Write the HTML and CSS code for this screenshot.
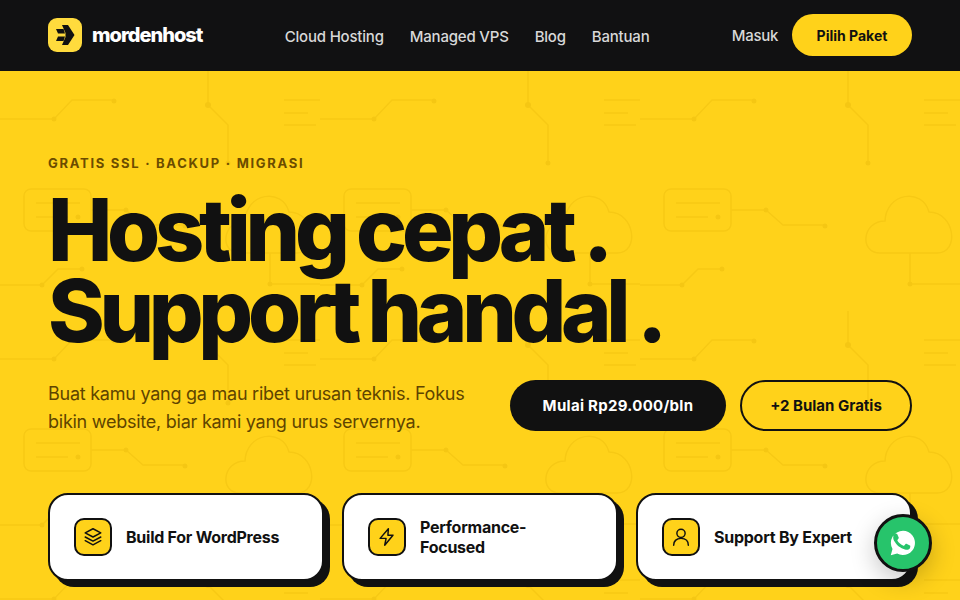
FILE: index.html
```html
<!DOCTYPE html>
<html lang="id">
<head>
<meta charset="utf-8">
<title>mordenhost</title>
<link rel="stylesheet" href="styles.css">
</head>
<body>
<header class="topbar">
  <a class="brand" href="#">
    <span class="brand-mark">
      <svg viewBox="0 0 34 34" width="34" height="34"><path d="M14 7h6l6.500 10L20 27h-6l3.500-8v-4zM8 11h7.500l1.500 4.500h-7zM10 18.500h7L15.500 23H8z" fill="#111"/></svg>
    </span>
    <span class="brand-name">mordenhost</span>
  </a>
  <nav class="nav">
    <a href="#">Cloud Hosting</a>
    <a href="#">Managed VPS</a>
    <a href="#">Blog</a>
    <a href="#">Bantuan</a>
  </nav>
  <div class="actions">
    <a class="login" href="#">Masuk</a>
    <a class="pick" href="#">Pilih Paket</a>
  </div>
</header>
<main class="hero">
  <svg class="pattern" width="100%" height="100%" aria-hidden="true">
    <defs>
      <pattern id="tile" width="320" height="240" patternUnits="userSpaceOnUse">
        <g fill="none" stroke="#f7c914" stroke-width="1.500">
          <path d="M0 48H54L72 29H114"/>
          <path d="M208 0V34L228 54V92"/>
          <path d="M284 29H320M284 42H308M284 54H316"/>
          <rect x="24" y="118" width="67" height="42" rx="7"/>
          <path d="M36 132H80M36 146H68"/>
          <path d="M91 139H126L143 154H185"/>
          <path d="M240 182C219 182 222 150 245 150C246 122 282 116 289 141C315 141 320 182 297 182Z"/>
          <path d="M270 182V213H320M0 214H42L58 198H82"/>
        </g>
        <g fill="#f5c713">
          <circle cx="54" cy="48" r="2.500"/><circle cx="114" cy="30" r="2.500"/>
          <circle cx="208" cy="34" r="3"/><circle cx="228" cy="92" r="2.500"/>
          <circle cx="78" cy="146" r="2.500"/><circle cx="126" cy="139" r="2.500"/>
          <circle cx="185" cy="155" r="2.500"/><circle cx="270" cy="213" r="2.500"/>
          <circle cx="42" cy="214" r="2.500"/><circle cx="82" cy="198" r="2.500"/>
        </g>
      </pattern>
    </defs>
    <rect width="100%" height="100%" fill="url(#tile)"/>
  </svg>
  <div class="hero-inner">
    <p class="eyebrow">GRATIS SSL · BACKUP · MIGRASI</p>
    <h1 class="headline">Hosting cepat .<br>Support handal .</h1>
    <div class="lead-row">
      <p class="lead">Buat kamu yang ga mau ribet urusan teknis. Fokus bikin website, biar kami yang urus servernya.</p>
      <div class="cta">
        <a class="btn btn-dark" href="#">Mulai Rp29.000/bln</a>
        <a class="btn btn-line" href="#">+2 Bulan Gratis</a>
      </div>
    </div>
    <div class="cards">
      <div class="card">
        <span class="card-icon"><svg viewBox="0 0 24 24" width="22" height="22"><path d="M12 3 3.500 7.500 12 12l8.500-4.500zM3.500 12 12 16.500 20.500 12M3.500 16 12 20.500 20.500 16"/></svg></span>
        <span class="card-text">Build For WordPress</span>
      </div>
      <div class="card">
        <span class="card-icon"><svg viewBox="0 0 24 24" width="22" height="22"><path d="M13.500 3 4.500 13.500H11L9.500 21l9-11H13z"/></svg></span>
        <span class="card-text">Performance-<br>Focused</span>
      </div>
      <div class="card">
        <span class="card-icon"><svg viewBox="0 0 24 24" width="22" height="22"><circle cx="12" cy="8" r="4.500"/><path d="M4 21c0-5 3.500-7.500 8-7.500s8 2.500 8 7.500"/></svg></span>
        <span class="card-text">Support By Expert</span>
      </div>
    </div>
  </div>
</main>
<a class="wa" href="#" aria-label="WhatsApp">
  <svg viewBox="0 0 24 24" width="28" height="28"><path fill="#fff" d="M12 1.500a10.400 10.400 0 0 0-9 15.600L1.500 22.500l5.500-1.400A10.400 10.400 0 1 0 12 1.500zm6 14.700c-.3.800-1.500 1.500-2.400 1.600-.7.100-1.500.100-4.700-1.300-3.700-1.600-5.700-5.200-5.900-5.500-.2-.2-1.400-1.900-1.400-3.600s.9-2.500 1.200-2.900c.3-.3.700-.4.900-.4h.7c.2 0 .5-.1.800.6l1.100 2.600c.1.200.1.400 0 .6l-.9 1.300c-.2.200-.3.400-.1.800.2.300 1 1.600 2.100 2.500 1.400 1.300 2.600 1.700 3 1.800.3.200.5.100.7-.1l1.100-1.300c.3-.3.500-.3.800-.2l2.500 1.200c.4.200.6.300.7.400.1.200.1.900-.2 1.900z"/></svg>
</a>
</body>
</html>
```

FILE: styles.css
```css
* { box-sizing: border-box; }
html, body { margin: 0; height: 100%; overflow: hidden; }
body {
  font-family: "Inter", "Liberation Sans", sans-serif;
  background: #ffd21a;
  color: #111;
}
a { text-decoration: none; color: inherit; }
p, h1 { margin: 0; }

.topbar {
  height: 71px;
  background: #111112;
  border-bottom: 1px solid #111112;
  padding: 0 48px;
  display: flex;
  align-items: center;
  justify-content: space-between;
}
.brand { display: flex; align-items: center; gap: 10px; }
.brand-mark {
  width: 34px; height: 34px;
  border-radius: 9px;
  background: #ffdb3d;
  display: block;
}
.brand-mark svg { display: block; }
.brand-name { color: #fff; font-size: 20px; font-weight: 800; letter-spacing: -1px; }
.nav { display: flex; gap: 26px; font-size: 15px; font-weight: 500; color: #d8d8d8; letter-spacing: -0.2px; padding-top: 2px; }
.actions { display: flex; align-items: center; gap: 14px; }
.login { font-size: 15px; font-weight: 500; color: #d8d8d8; letter-spacing: -0.3px; }
.pick {
  width: 120px; height: 42px;
  border-radius: 21px;
  background: #ffd21a;
  color: #111;
  font-size: 14px; font-weight: 700;
  display: flex; align-items: center; justify-content: center;
}

.hero { position: relative; height: 529px; overflow: hidden; }
.pattern { position: absolute; inset: 0; display: block; }
.hero-inner { position: relative; padding: 84px 48px 0; }
.eyebrow { font-size: 13px; line-height: 16px; font-weight: 700; letter-spacing: 1.72px; color: #6b4c00; }
.headline {
  margin-top: 19px;
  font-size: 86px;
  line-height: 81px;
  font-weight: 800;
  letter-spacing: -5.3px;
  word-spacing: -2px;
  color: #111;
}
.lead-row { margin-top: 28px; display: flex; align-items: flex-start; justify-content: space-between; }
.lead { width: 430px; font-size: 18px; line-height: 28px; color: #5e4400; letter-spacing: -0.25px; }
.cta { display: flex; gap: 14px; }
.btn {
  height: 51px;
  border-radius: 26px;
  font-size: 15px; font-weight: 700;
  display: flex; align-items: center; justify-content: center;
}
.btn-dark { width: 216px; background: #111; color: #fff; letter-spacing: .3px; }
.btn-line { width: 172px; border: 2px solid #111; color: #111; }

.cards { margin-top: 57px; display: grid; grid-template-columns: repeat(3, 276px); gap: 18px; }
.card {
  height: 88px;
  background: #fff;
  border: 2px solid #111;
  border-radius: 20px;
  box-shadow: 6px 6px 0 #111;
  padding: 0 24px;
  display: flex; align-items: center; gap: 14px;
}
.card-icon {
  flex: none;
  width: 38px; height: 38px;
  border: 2px solid #111;
  border-radius: 10px;
  background: #ffd21a;
  display: flex; align-items: center; justify-content: center;
}
.card-icon svg { fill: none; stroke: #111; stroke-width: 1.600; stroke-linejoin: round; stroke-linecap: round; }
.card-text { font-size: 16px; line-height: 20px; font-weight: 700; letter-spacing: -0.25px; }

.wa {
  position: fixed;
  right: 28px; bottom: 28px;
  width: 58px; height: 58px;
  border-radius: 50%;
  background: #27c46b;
  border: 3px solid #111;
  box-shadow: 0 8px 24px rgba(0,0,0,.22);
  display: flex; align-items: center; justify-content: center;
}
```
